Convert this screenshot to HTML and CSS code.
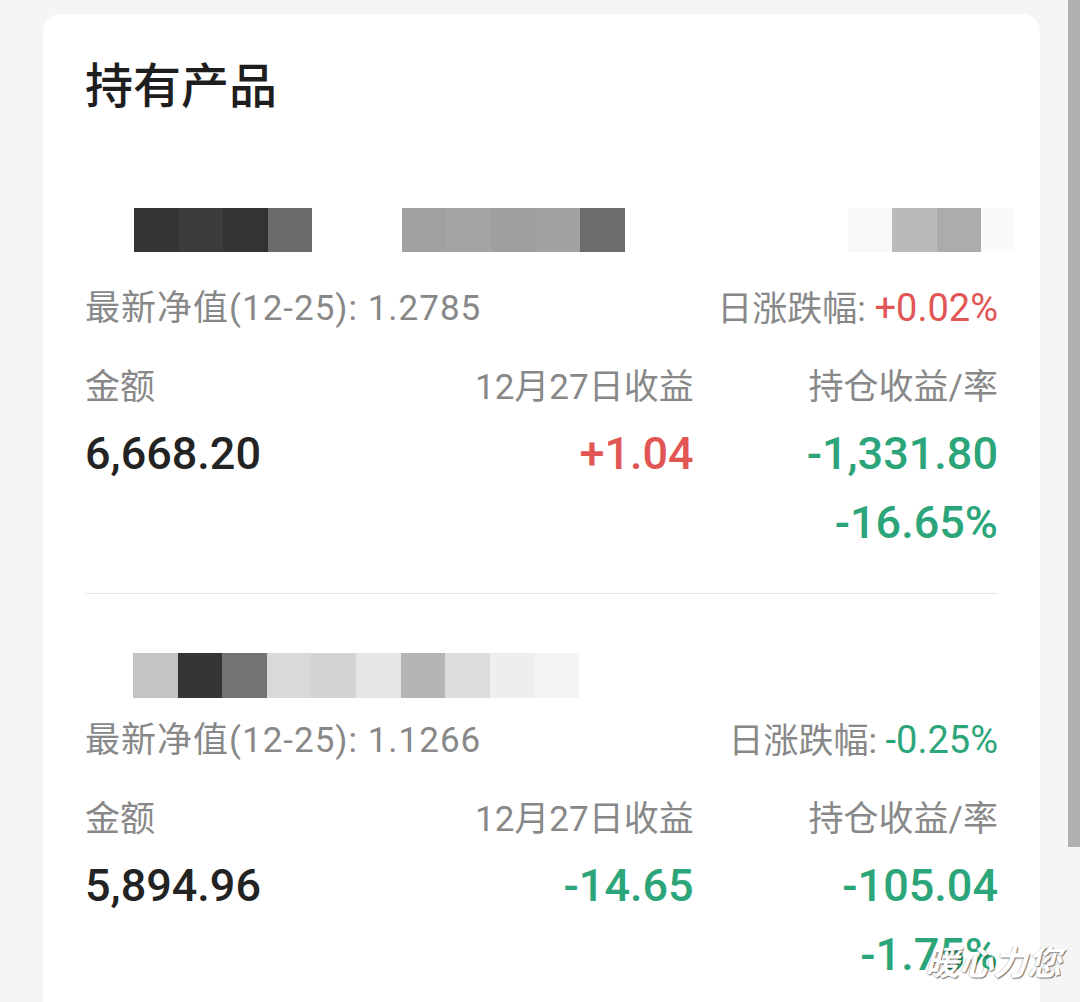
FILE: index.html
```
<!DOCTYPE html>
<html lang="zh-CN">
<head>
<meta charset="utf-8">
<title>持有产品</title>
<link rel="stylesheet" href="styles.css">
</head>
<body>
<div class="page">
  <section class="card">
    <h1 class="title">持有产品</h1>

    <div class="product product-first">
      <div class="name-row">
        <span class="cell g35"></span><span class="cell g3c"></span><span class="cell g33"></span><span class="cell g6b"></span>
        <span class="cell"></span><span class="cell"></span>
        <span class="cell ga0"></span><span class="cell ga4"></span><span class="cell g9f"></span><span class="cell ga2"></span><span class="cell g6c"></span>
        <span class="cell"></span><span class="cell"></span><span class="cell"></span><span class="cell"></span><span class="cell"></span>
        <span class="cell gf8"></span><span class="cell gba"></span><span class="cell gac"></span><span class="cell cell-part gfa"></span>
      </div>
      <div class="nav-row">
        <span class="nav">最新净值(12-25): 1.2785</span>
        <span class="change">日涨跌幅: <span class="rate up">+0.02%</span></span>
      </div>
      <div class="stats">
        <div class="label">金额</div>
        <div class="label right">12月27日收益</div>
        <div class="label right">持仓收益/率</div>
        <div class="value">6,668.20</div>
        <div class="value right up">+1.04</div>
        <div class="value right down">-1,331.80</div>
        <div class="value right down pct">-16.65%</div>
      </div>
    </div>

    <div class="divider"></div>

    <div class="product product-second">
      <div class="name-row">
        <span class="cell gc4"></span><span class="cell g35"></span><span class="cell g73"></span><span class="cell gd9"></span>
        <span class="cell gd3"></span><span class="cell ge6"></span><span class="cell gb5"></span><span class="cell gdc"></span>
        <span class="cell gee"></span><span class="cell gf4"></span>
      </div>
      <div class="nav-row">
        <span class="nav">最新净值(12-25): 1.1266</span>
        <span class="change">日涨跌幅: <span class="rate down">-0.25%</span></span>
      </div>
      <div class="stats">
        <div class="label">金额</div>
        <div class="label right">12月27日收益</div>
        <div class="label right">持仓收益/率</div>
        <div class="value">5,894.96</div>
        <div class="value right down">-14.65</div>
        <div class="value right down">-105.04</div>
        <div class="value right down pct">-1.75%</div>
      </div>
    </div>
  </section>

  <div class="scrollbar"></div>
  <div class="watermark">暖心力您</div>
</div>
</body>
</html>
```
FILE: styles.css
```
html, body {
  margin: 0;
  height: 100%;
  overflow: hidden;
  background: #f5f5f5;
}

body {
  font-family: Roboto, "Noto Sans CJK SC", sans-serif;
}

.page {
  position: relative;
  height: 1002px;
  padding: 14px 0 0 43px;
  box-sizing: border-box;
}

.card {
  width: 997px;
  min-height: 1100px;
  background: #fff;
  border-radius: 18px 18px 0 0;
  padding: 44px 42px 0;
  box-sizing: border-box;
}

.title {
  margin: 0;
  font-family: "Noto Sans CJK SC", sans-serif;
  font-size: 48px;
  line-height: 48px;
  font-weight: 500;
  color: #1e1e1e;
}

.product-first {
  margin-top: 102px;
}

.product-second {
  margin-top: 59px;
}

.name-row {
  display: flex;
  height: 44px;
  padding-left: 49px;
}

.product-second .name-row {
  height: 45px;
  padding-left: 48px;
}

.cell {
  flex: none;
  width: 44.6px;
  height: 100%;
}

.cell-part { width: 34px; }

.g33 { background: #333333; }
.g35 { background: #353535; }
.g3c { background: #3c3c3c; }
.g6b { background: #6b6b6b; }
.g6c { background: #6c6c6c; }
.g73 { background: #737373; }
.g9f { background: #9f9f9f; }
.ga0 { background: #a0a0a0; }
.ga2 { background: #a2a2a2; }
.ga4 { background: #a4a4a4; }
.gac { background: #acacac; }
.gb5 { background: #b5b5b5; }
.gba { background: #bababa; }
.gc4 { background: #c4c4c4; }
.gd3 { background: #d3d3d3; }
.gd9 { background: #d9d9d9; }
.gdc { background: #dcdcdc; }
.ge6 { background: #e6e6e6; }
.gee { background: #eeeeee; }
.gf4 { background: #f4f4f4; }
.gf8 { background: #f8f8f8; }
.gfa { background: #fafafa; }

.nav-row {
  display: flex;
  justify-content: space-between;
  align-items: center;
  height: 44px;
  font-size: 35px;
  line-height: 44px;
  color: #888;
  white-space: nowrap;
}

.nav {
  letter-spacing: 1px;
}

.rate {
  font-size: 38px;
}

.product-first .nav-row {
  margin-top: 35px;
}

.product-second .nav-row {
  margin-top: 21px;
}

.stats {
  display: grid;
  grid-template-columns: repeat(3, 1fr);
  grid-auto-rows: 44px;
  row-gap: 25px;
  margin-top: 32px;
}

.label {
  padding-top: 6px;
  font-size: 35px;
  line-height: 38px;
  color: #888;
  white-space: nowrap;
}

.value {
  font-size: 45px;
  line-height: 44px;
  font-weight: 500;
  color: #232323;
  white-space: nowrap;
}

.right {
  text-align: right;
}

.up {
  color: #e25555;
}

.down {
  color: #2ba579;
}

.pct {
  grid-column: 3;
}

.divider {
  height: 1px;
  margin-top: 48px;
  background: #e6e6e6;
}

.scrollbar {
  position: absolute;
  top: 0;
  right: 0;
  width: 12px;
  height: 847px;
  background: #b0b0b0;
}

.watermark {
  position: absolute;
  left: 925px;
  top: 943px;
  font-family: "Noto Sans CJK SC", sans-serif;
  font-size: 34px;
  line-height: 36px;
  font-weight: 700;
  font-style: italic;
  color: #fff;
  text-shadow: 1px 1px 1px rgba(0, 0, 0, 0.55), -1px 0 0 rgba(0, 0, 0, 0.2);
  white-space: nowrap;
}
```
